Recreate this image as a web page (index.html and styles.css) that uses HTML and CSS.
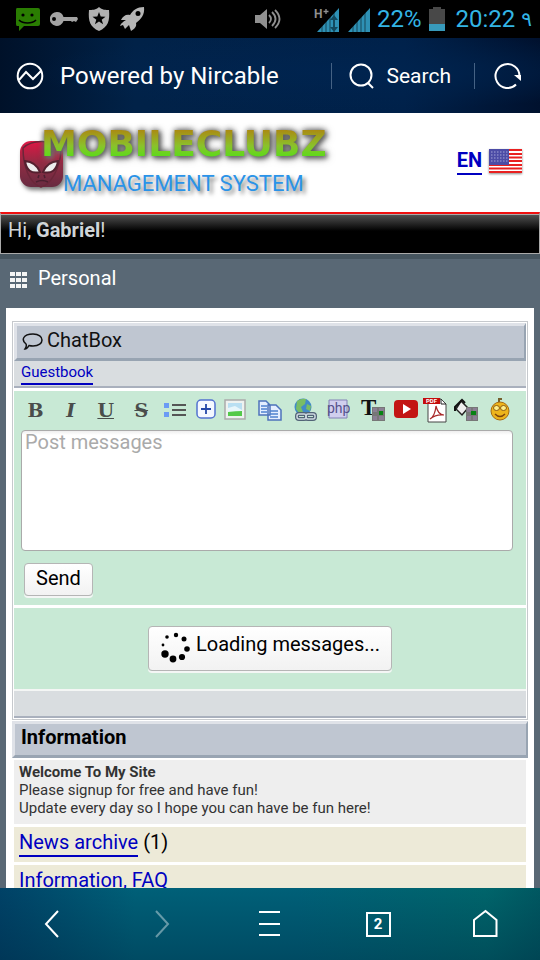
FILE: index.html
```html
<!DOCTYPE html>
<html lang="en">
<head>
<meta charset="utf-8">
<meta name="viewport" content="width=device-width, initial-scale=1">
<title>MobileClubz</title>
<link rel="stylesheet" href="styles.css">
</head>
<body>
<div class="status">
  <div class="status-left">
    <svg width="25" height="24" viewBox="0 0 25 24"><path fill="#2a7d02" d="M2 1h21q2 0 2 2v14q0 2-2 2H9l-5 5v-5H2q-1 0-1-2V3q0-2 1-2z"/><path d="M4 13c4 4 13 4 17 0" fill="none" stroke="#000" stroke-width="1.7"/><circle cx="8" cy="8" r="1.6"/><circle cx="17" cy="8" r="1.6"/></svg>
    <svg width="28" height="24" viewBox="0 0 28 24"><path fill="#a3a3a3" fill-rule="evenodd" d="M7 5a7 7 0 0 1 6.500 5H27l1 2-2 3-2-1-2 1-1-1H13.500A7 7 0 1 1 7 5zM4 10a2 2 0 1 0 0 4 2 2 0 0 0 0-4z"/></svg>
    <svg width="22" height="24" viewBox="0 0 22 24"><path fill="#b0b0b0" d="M11 0c3 3 7 3 10 3 1 11-1 17-10 21C2 20 0 14 1 3c3 0 7 0 10-3z"/><path d="M11 5l1.700 4.500 4.800.2-3.800 3 1.400 4.600-4.100-2.700-4.100 2.700 1.400-4.600-3.800-3 4.800-.2z"/></svg>
    <svg width="25" height="24" viewBox="0 0 25 24"><path fill="#b5b5b5" fill-rule="evenodd" d="M24 0c1 8-3 12-8 16 1 4-2 6-5 8l-2-6-4 4-2-4-3 1c1-3 3-4 6-6H1c2-4 5-6 9-5C13 3 17 0 24 0zm-6 4a2.500 2.500 0 1 0 0 5 2.500 2.500 0 0 0 0-5z"/></svg>
  </div>
  <div class="status-right">
    <svg width="28" height="22" viewBox="0 0 28 22"><path fill="#909090" d="M1 7h5l7-6v20l-7-6H1z"/><path d="M15 7q4 4 0 8M18 4q7 7 0 14M21 2q9 9 0 18" fill="none" stroke="#909090" stroke-width="1.800"/></svg>
    <svg class="network" width="26" height="26" viewBox="0 0 26 26"><path fill="#2e91b5" d="M25 2v24H3z"/><path d="M8 18v8M12 14v12M16 10v16M20 7v19" stroke="#000" stroke-opacity=".5"/><path d="M20 9l4 5h-3v7h3l-4 5-4-5h3v-7h-3z" fill="#12495e"/><path d="M9.500 5.500h5M12 3v5" stroke="#909090" stroke-width="1.300"/><text x="0" y="12" class="hplus">H</text></svg>
    <svg class="signal" width="22" height="25" viewBox="0 0 22 25"><path fill="#2e91b5" d="M22 1v24H0z"/><path d="M5 18v7M9 14v11M13 9v16M17 6v19" stroke="#000" stroke-opacity=".5"/></svg>
    <span class="percent">22%</span>
    <svg class="battery" width="16" height="24" viewBox="0 0 16 24"><path fill="#484848" d="M0 2h4V0h8v2h4v22H0z"/><path fill="#389abb" d="M0 17h16v7H0z"/></svg>
    <span>20:22</span><span class="nine">٩</span>
  </div>
</div>
<header class="top">
  <svg width="28" height="28" viewBox="0 0 28 28" class="line"><circle cx="14" cy="14" r="12.300"/><path d="M3 18l7-8 7 7 8-8"/></svg>
  <h1>Powered by Nircable</h1>
  <button class="search"><svg width="26" height="26" viewBox="0 0 26 26" class="line"><circle cx="12" cy="12" r="10.500"/><path d="M19 20l5 5"/></svg>Search</button>
  <button class="reload" aria-label="Reload"><svg width="28" height="28" viewBox="0 0 28 28" class="line"><path d="M25.500 14A12 12 0 1 0 22 22.500"/><path d="M20 13h7v6z" fill="#fff" stroke="none"/></svg></button>
</header>
<main class="page">
  <div class="banner">
    <div class="logo">
      <svg class="alien" width="48" height="52" viewBox="0 0 48 52"><defs><linearGradient id="a" x2="0" y2="1"><stop stop-color="#df1745"/><stop offset=".5" stop-color="#8f2c43"/><stop offset="1" stop-color="#682b41"/></linearGradient></defs><rect x="2" y="1" width="43" height="46" rx="11" fill="url(#a)"/><path d="M5 8C15-1 34-1 43 10c-1 18-10 35-20 37C12 44 5 27 5 8z" fill="none" stroke="#6b2639" stroke-width="1.500"/><path d="M7 21q11 1 15 11-13 3-15-11zM40 21q-11 1-15 11 13 3 15-11z" fill="#eee" stroke="#54202f" stroke-width="2"/><path d="M21 35l-1 3M26 35l1 3M18 42q6-3 12 0" stroke="#4b2030" stroke-width="1.500" fill="none"/></svg>
      <div class="logo-text"><span class="club">MOBILECLUBZ</span><span class="system">MANAGEMENT SYSTEM</span></div>
    </div>
    <a class="lang" href="#"><span>EN</span><svg width="36" height="28" viewBox="0 0 36 28"><path fill="#fff" d="M2 1h33v24H2z"/><path stroke="#e92020" stroke-width="2" d="M2 2h33M2 6h33M2 9.500h33M2 13h33M2 17h33M2 20.500h33M2 24h33"/><path fill="#4c4ca6" d="M2 1h20v16H2z"/><path d="M4 4h17M4 7h17M4 10h17M4 13h17" stroke="#a3a3d8" stroke-width="1.200" stroke-dasharray="1.500 1.500"/></svg></a>
  </div>
  <div class="greeting">Hi, <b>Gabriel</b>!</div>
  <nav class="personal"><svg width="18" height="18" viewBox="0 0 18 18"><path fill="#f4f4f4" d="M0 1h5v4H0zM6 1h5v4H6zM12 1h5v4h-5zM0 7h5v4H0zM6 7h5v4H6zM12 7h5v4h-5zM0 13h5v4H0zM6 13h5v4H6zM12 13h5v4h-5z"/></svg>Personal</nav>
  <div class="panel">
    <section class="chat">
      <h2 class="title"><svg width="22" height="20" viewBox="0 0 22 20"><path d="M11 2c12 0 12 12 0 12q-2 0-4-.5Q5 17 3 17q2-3 1-5C-1 8 1 2 11 2z" fill="none" stroke="#111" stroke-width="1.500"/></svg>ChatBox</h2>
      <div class="subbar"><a class="ul" href="#">Guestbook</a></div>
      <form class="compose">
        <div class="tools">
          <button type="button" class="serif"><b>B</b></button>
          <button type="button" class="serif"><b><i>I</i></b></button>
          <button type="button" class="serif"><b><u>U</u></b></button>
          <button type="button" class="serif"><b><s>S</s></b></button>
          <button type="button" aria-label="List"><svg width="22" height="24" viewBox="0 0 22 24"><path fill="#6b9bf5" d="M0 5h5v5H0zM0 14h5v5H0z"/><path stroke="#555" stroke-width="2" d="M8 7h14M8 12h14M8 17h14"/></svg></button>
          <button type="button" aria-label="Add"><svg width="22" height="24" viewBox="0 0 22 24"><rect x="2" y="2" width="18" height="18" rx="4" fill="#f4f8ff" stroke="#5272d0" stroke-width="1.500"/><path d="M11 6v10M6 11h10" stroke="#2448a8" stroke-width="1.800"/></svg></button>
          <button type="button" aria-label="Image"><svg width="22" height="24" viewBox="0 0 22 24"><rect x="1" y="2" width="20" height="19" fill="#eef2f0" stroke="#aaa" stroke-width="1.500"/><path fill="#b9dff2" d="M4 5h14v13H4z"/><path fill="#e8f6fb" d="M4 10l7-2 7 4v3H4z"/><path fill="#54c94a" d="M4 14q8-1 14-1v5H4z"/></svg></button>
          <button type="button" aria-label="Copy"><svg width="24" height="24" viewBox="0 0 24 24"><path d="M1 3h7l4 4v10H1zM10 7h8l5 5v10H10z" fill="#e4eeff" stroke="#4d73bb" stroke-width="1.500"/><path d="M3 8h6M3 11h6M3 14h6M12 13h8M12 16h8M12 19h8" stroke="#4f82d0" stroke-width="1.500"/></svg></button>
          <button type="button" aria-label="Link"><svg width="24" height="24" viewBox="0 0 24 24"><circle cx="10" cy="9" r="8.500" fill="#428bc7"/><path d="M4 3q5-3 9-2l-1 5-4 3 2 5-3 2-4-5zM14 6l4 2-1 5-4-2z" fill="#79bd65"/><g fill="none" stroke="#526477" stroke-width="4"><rect x="4" y="16" width="9" height="5" rx="2"/><rect x="13" y="16" width="9" height="5" rx="2"/></g><g fill="none" stroke="#ccd7df" stroke-width="1.500"><rect x="4" y="16" width="9" height="5" rx="2"/><rect x="13" y="16" width="9" height="5" rx="2"/></g></svg></button>
          <button type="button" aria-label="PHP"><svg width="24" height="24" viewBox="0 0 24 24"><path fill="#d0cfee" stroke="#8280b6" d="M3 2h18v18H3z"/><text x="1" y="15" class="php">php</text></svg></button>
          <button type="button" aria-label="Text colour"><svg width="26" height="24" viewBox="0 0 26 24"><text x="1" y="17" class="tee">T</text><path fill="#777" d="M12 9h13v14H12z"/><path fill="#8b7f94" d="M13 10h4v4h-4zM19 10h5v3h-5zM13 18h4v4h-4zM19 18h5v4h-5z"/><path fill="#078213" d="M19 13h4v4h-4z"/></svg></button>
          <button type="button" aria-label="Video"><svg width="24" height="24" viewBox="0 0 24 24"><rect y="2" width="24" height="18" rx="4" fill="#c31513"/><path fill="#fff" d="M9 6l8 5-8 5z"/></svg></button>
          <button type="button" aria-label="PDF"><svg width="24" height="26" viewBox="0 0 24 26"><path d="M5 2h13l5 5v18H5z" fill="#fff" stroke="#444"/><path d="M18 2v5h5" fill="none" stroke="#222"/><path fill="#c40c0c" d="M0 1h17v6H0z"/><text x="3" y="6" class="pdf">PDF</text><path d="M7 22q5-3 6-13 2 9 8 9-8-1-14 4" fill="none" stroke="#a92929" stroke-width="1.200"/></svg></button>
          <button type="button" aria-label="Background"><svg width="26" height="24" viewBox="0 0 26 24"><path d="M8 3l7 7-6 7-6-6z" fill="#eee" stroke="#222" stroke-width="1.500"/><path d="M2 13V9l7-7 3 3" fill="none" stroke="#111" stroke-width="2"/><path fill="#777" d="M13 9h12v14H13z"/><path fill="#8b7f94" d="M14 10h4v4h-4zM20 10h4v3h-4zM14 18h4v4h-4zM20 18h4v4h-4z"/><path fill="#078213" d="M18 13h5v4h-5z"/></svg></button>
          <button type="button" aria-label="Smiley"><svg width="22" height="24" viewBox="0 0 22 24"><path d="M10 4V1h3" fill="none" stroke="#76602d" stroke-width="2"/><circle cx="11" cy="13" r="9" fill="#edb41b" stroke="#a86b10"/><ellipse cx="7.500" cy="10" rx="3" ry="2.500" fill="#fff08b" stroke="#8c5a12"/><ellipse cx="14.500" cy="10" rx="3" ry="2.500" fill="#fff08b" stroke="#8c5a12"/><path d="M6 16q5 5 10 0" fill="none" stroke="#7d430c" stroke-width="1.500"/></svg></button>
        </div>
        <textarea aria-label="Message" placeholder="Post messages"></textarea>
        <button type="button" class="btn send">Send</button>
      </form>
      <div class="loading"><div class="btn load"><svg width="30" height="32" viewBox="0 0 30 32"><circle cx="16" cy="3" r="2.200"/><circle cx="24" cy="7" r="2.500"/><circle cx="27" cy="17" r="2.800"/><circle cx="22" cy="25" r="3.100"/><circle cx="13" cy="27" r="3.400"/><circle cx="5" cy="22" r="3.700"/><circle cx="3" cy="13" r="1.400"/><circle cx="7" cy="5" r="1.800"/></svg>Loading messages...</div></div>
      <div class="chat-foot"></div>
    </section>
    <section>
      <h2 class="title info">Information</h2>
      <p class="welcome"><b>Welcome To My Site</b><br>Please signup for free and have fun!<br>Update every day so I hope you can have be fun here!</p>
      <div class="row"><a class="ul" href="#">News archive</a> (1)</div>
      <div class="row"><a class="ul" href="#">Information, FAQ</a></div>
    </section>
  </div>
</main>
<nav class="bottom">
  <button aria-label="Back"><svg width="28" height="30" viewBox="0 0 28 30" class="line"><path d="M18 2L6 15l12 13"/></svg></button>
  <button aria-label="Forward" class="dim"><svg width="28" height="30" viewBox="0 0 28 30" class="line"><path d="M8 2l12 13L8 28"/></svg></button>
  <button aria-label="Menu"><svg width="28" height="30" viewBox="0 0 28 30" class="line"><path d="M3 3h21M3 15h21M3 26h21"/></svg></button>
  <button><span class="tabs">2</span></button>
  <button aria-label="Home"><svg width="28" height="30" viewBox="0 0 28 30" class="line"><path d="M2 11L13.500 2l11 9v16H2z"/></svg></button>
</nav>
</body>
</html>
```
FILE: styles.css
```css
* { box-sizing: border-box; }
body {
  margin: 0;
  height: 100vh;
  display: flex;
  flex-direction: column;
  overflow: hidden;
  background: #596875;
  font: 20px/24px Roboto, "Noto Sans", sans-serif;
  color: #000;
}
button { border: 0; padding: 0; background: none; color: inherit; font: inherit; }
svg { display: block; flex: none; }
h1, h2, p { margin: 0; }
a { color: #0000c0; text-decoration: none; }
.line { fill: none; stroke: #fff; stroke-width: 2; }

.status {
  flex: none;
  height: 38px;
  padding: 0 8px 0 15px;
  background: #000;
  display: flex;
  justify-content: space-between;
  align-items: center;
  color: #33b5e5;
  font-size: 24px;
}
.status-left { display: flex; gap: 10px; }
.status-right { display: flex; align-items: center; }
.network { margin-left: 32px; }
.signal { margin: 0 7px 0 8px; }
.battery { margin: 0 10px 0 8px; }
.nine { margin-left: 6px; font: 20px/24px "DejaVu Sans", sans-serif; }
.hplus { font: bold 12px Roboto, sans-serif; fill: #909090; }

.top {
  flex: none;
  height: 75px;
  padding: 0 18px 0 16px;
  display: flex;
  align-items: center;
  color: #fff;
  background:
    radial-gradient(ellipse at 65% 45%, #00244f, transparent 65%),
    linear-gradient(90deg, #001129, #012248 25%, #00214a 75%, #00112e);
}
.top h1 { margin-left: 16px; flex: 1; font-size: 24px; font-weight: 400; }
.search { display: flex; align-items: center; gap: 11px; padding: 0 23px 0 17px; font-size: 21px; border: 1px solid #456284; border-width: 0 1px; }
.reload { margin-left: 19px; }

.page { flex: 1; min-height: 0; overflow: hidden; }
.banner { height: 99px; padding: 0 17px 0 18px; display: flex; justify-content: space-between; background: #fff; }
.logo { display: flex; padding-top: 12px; }
.alien { margin-top: 15px; filter: drop-shadow(2px 3px 2px #777); }
.logo-text { display: flex; flex-direction: column; margin-left: -25px; }
.club {
  font: bold 36px/38px "DejaVu Sans", sans-serif;
  color: transparent;
  background: linear-gradient(#a98d14 15%, #8ac22b 55%, #59dd18 85%);
  -webkit-background-clip: text;
  background-clip: text;
  filter: drop-shadow(0 0 3px #555) drop-shadow(2px 2px 2px #777);
}
.system { margin-left: 22px; font: 22px/42px Roboto, sans-serif; color: #2a93e8; text-shadow: 3px 3px 4px #777; }
.lang { display: flex; align-items: flex-start; gap: 5px; padding-top: 34px; font-weight: 700; }
.lang span { border-bottom: 2px solid #0000c0; line-height: 26px; }
.lang svg { filter: drop-shadow(0 1px 1px #888); margin-top: 1px; }

.greeting {
  height: 42px;
  padding: 4px 7px;
  color: #d0d5d8;
  border: 1px solid #aaa;
  border-top: 2px solid #f01010;
  box-shadow: inset 0 1px #aaa;
  background: linear-gradient(#555, #000 17px);
}
.personal {
  height: 54px;
  padding: 12px 10px;
  display: flex;
  gap: 10px;
  align-items: flex-start;
  color: #fff;
  background: linear-gradient(#46555f 5px, #596875 5px);
}
.personal svg { margin-top: 5px; }

.panel { margin: 0 6px; padding: 13px 6px 0; background: #fff; }
.chat { border: 1px solid #c6c9cd; padding: 1px; margin-bottom: 1px; }
.title {
  display: flex;
  gap: 3px;
  height: 38px;
  padding: 2px 5px;
  font-size: 20px;
  line-height: 24px;
  font-weight: 400;
  color: #111;
  background: #bfc6d1;
  border: solid;
  border-width: 3px 2px 3px 3px;
  border-color: #dfe2e8 #98a4b2 #98a4b2 #dfe2e8;
}
.title svg { margin-top: 4px; }
.info { height: 37px; padding: 1px 6px; font-weight: 700; color: #000; }
.subbar { height: 27px; padding: 0 7px; font-size: 15px; line-height: 22px; background: #d9dde0; border-bottom: 2px solid #a9b0bd; }
.ul { display: inline-block; border-bottom: 2px solid #0000c0; }
.compose { margin-top: 3px; padding: 3px 13px 9px 7px; background: #c8e9d5; }
.tools {
  display: grid;
  grid-template-columns: 35fr 35fr 35fr 36fr 31fr 32fr 26fr 42fr 28fr 38fr 32fr 34fr 24fr 38fr 30fr;
  height: 32px;
  margin: 0 -2px 4px -3px;
  align-items: center;
  justify-items: center;
}
.serif { font: 19px/26px "DejaVu Serif", serif; color: #4a4d4b; }
.php { font: 14px Roboto, sans-serif; fill: #56528c; }
.tee { font: bold 23px "Liberation Serif", serif; fill: #111; }
.pdf { font: bold 6px Roboto, sans-serif; fill: #fff; }
textarea {
  display: block;
  width: 100%;
  height: 121px;
  padding: 0 3px;
  resize: none;
  font: inherit;
  line-height: 22px;
  border: 1px solid #aaa;
  border-radius: 4px;
  background: linear-gradient(#eee, #fff 4px);
}
textarea::placeholder { color: #aaa; }
.btn { border: 1px solid #b5b5b5; border-radius: 4px; background: linear-gradient(#fff, #f2f2f2); box-shadow: 0 2px #f4f6f5; }
.send { display: block; margin: 12px 0 0 3px; height: 33px; padding: 0 11px 4px; }
.loading { display: flex; justify-content: center; height: 84px; padding-top: 18px; border-top: 3px solid #fff; background: #c8e9d5; }
.load { display: flex; height: 45px; gap: 6px; padding: 5px 11px; }
.chat-foot { height: 29px; border-top: 2px solid #f4f6f5; border-bottom: 2px solid #a9b0bd; background: #d9dde0; }
.welcome { margin: 2px 2px 3px; height: 64px; padding: 3px 5px; font-size: 15px; line-height: 18px; color: #333; background: #eee; }
.row { margin: 0 2px 3px; height: 35px; padding: 2px 5px; background: #edead8; }
.row .ul { line-height: 26px; }

.bottom {
  flex: none;
  height: 72px;
  display: grid;
  grid-template-columns: repeat(5, 1fr);
  align-items: center;
  justify-items: center;
  background:
    linear-gradient(transparent, rgba(0, 35, 60, .35)),
    linear-gradient(90deg, #004267, #006078 25%, #006078 55%, #00656b 90%, #005861);
}
.dim { opacity: .4; }
.tabs { display: block; width: 25px; height: 25px; border: 2px solid #fff; color: #fff; font-size: 15px; line-height: 21px; font-weight: 700; }
```
